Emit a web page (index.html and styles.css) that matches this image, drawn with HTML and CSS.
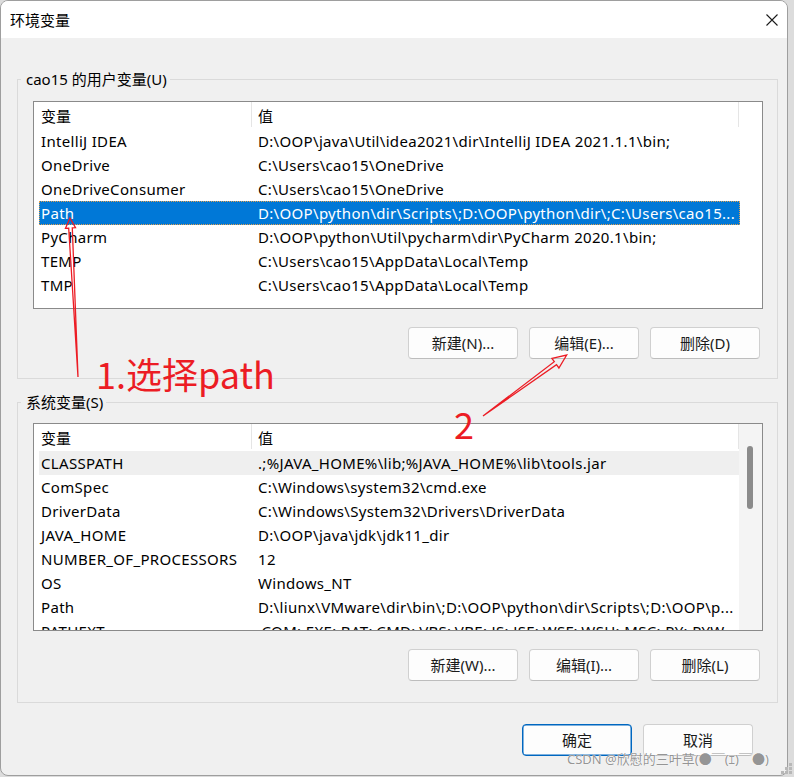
FILE: index.html
```html
<!DOCTYPE html>
<html lang="zh-CN">
<head>
<meta charset="utf-8">
<title>环境变量</title>
<link rel="stylesheet" href="styles.css">
</head>
<body>
<div class="window">
  <div class="titlebar">
    <span class="title">环境变量</span>
    <svg class="close" width="12" height="12" viewBox="0 0 12 12"><path d="M0.5 0.5 L11.5 11.5 M11.5 0.5 L0.5 11.5" stroke="#1b1b1b" stroke-width="1.1" fill="none"/></svg>
  </div>
  <div class="content">
    <fieldset class="group group-user">
      <legend>cao15 的用户变量(U)</legend>
      <div class="list">
        <div class="list-main">
          <div class="list-head"><div class="h1">变量</div><div class="h2">值</div></div>
          <div class="row"><span class="c1">IntelliJ IDEA</span><span class="c2">D:\OOP\java\Util\idea2021\dir\IntelliJ IDEA 2021.1.1\bin;</span></div>
          <div class="row"><span class="c1">OneDrive</span><span class="c2">C:\Users\cao15\OneDrive</span></div>
          <div class="row"><span class="c1">OneDriveConsumer</span><span class="c2">C:\Users\cao15\OneDrive</span></div>
          <div class="row selected"><span class="c1">Path</span><span class="c2">D:\OOP\python\dir\Scripts\;D:\OOP\python\dir\;C:\Users\cao15...</span></div>
          <div class="row"><span class="c1">PyCharm</span><span class="c2">D:\OOP\python\Util\pycharm\dir\PyCharm 2020.1\bin;</span></div>
          <div class="row"><span class="c1">TEMP</span><span class="c2">C:\Users\cao15\AppData\Local\Temp</span></div>
          <div class="row"><span class="c1">TMP</span><span class="c2">C:\Users\cao15\AppData\Local\Temp</span></div>
        </div>
      </div>
      <div class="buttons">
        <div class="btn">新建(N)...</div>
        <div class="btn">编辑(E)...</div>
        <div class="btn">删除(D)</div>
      </div>
    </fieldset>

    <fieldset class="group group-sys">
      <legend>系统变量(S)</legend>
      <div class="list">
        <div class="list-main">
          <div class="list-head"><div class="h1">变量</div><div class="h2">值</div></div>
          <div class="row hover"><span class="c1">CLASSPATH</span><span class="c2">.;%JAVA_HOME%\lib;%JAVA_HOME%\lib\tools.jar</span></div>
          <div class="row"><span class="c1">ComSpec</span><span class="c2">C:\Windows\system32\cmd.exe</span></div>
          <div class="row"><span class="c1">DriverData</span><span class="c2">C:\Windows\System32\Drivers\DriverData</span></div>
          <div class="row"><span class="c1">JAVA_HOME</span><span class="c2">D:\OOP\java\jdk\jdk11_dir</span></div>
          <div class="row"><span class="c1">NUMBER_OF_PROCESSORS</span><span class="c2">12</span></div>
          <div class="row"><span class="c1">OS</span><span class="c2">Windows_NT</span></div>
          <div class="row"><span class="c1">Path</span><span class="c2">D:\liunx\VMware\dir\bin\;D:\OOP\python\dir\Scripts\;D:\OOP\p...</span></div>
          <div class="row"><span class="c1">PATHEXT</span><span class="c2">.COM;.EXE;.BAT;.CMD;.VBS;.VBE;.JS;.JSE;.WSF;.WSH;.MSC;.PY;.PYW</span></div>
        </div>
        <div class="scrollbar"><div class="thumb"></div></div>
      </div>
      <div class="buttons">
        <div class="btn">新建(W)...</div>
        <div class="btn">编辑(I)...</div>
        <div class="btn">删除(L)</div>
      </div>
    </fieldset>

    <div class="footer">
      <div class="btn primary">确定</div>
      <div class="btn">取消</div>
    </div>
  </div>
</div>

<svg class="marks" width="794" height="777" viewBox="0 0 794 777">
  <path d="M70 218 L75.5 227.7 L72.3 227.9 L78 377 L68.7 228.1 L65.5 228.3 Z" fill="none" stroke="#ec1c24" stroke-width="1.3" stroke-linejoin="miter"/>
  <path d="M566.7 355 L558.9 368 L556.5 364.7 L483 416 L554.3 361.7 L551.9 358.4 Z" fill="none" stroke="#ec1c24" stroke-width="1.3" stroke-linejoin="miter"/>
</svg>
<div class="note note1">1.选择path</div>
<div class="note note2">2</div>
<div class="watermark">CSDN @欣慰的三叶草(●￣(ｴ)￣●)</div>
<div class="grip"><i></i><i></i><i></i><i></i><i></i><i></i></div>
</body>
</html>
```

FILE: styles.css
```css
* { box-sizing: border-box; }
html, body { margin: 0; padding: 0; }
body {
  width: 794px;
  height: 777px;
  background: #dcdcdc;
  font-family: "Noto Sans", "Noto Sans CJK SC", sans-serif;
  font-size: 15px;
  color: #000;
  position: relative;
  overflow: hidden;
}
.window {
  width: 788px;
  height: 776px;
  border: 1px solid #9e9e9e;
  border-radius: 8px;
  background: #f0f0f0;
  overflow: hidden;
  display: flex;
  flex-direction: column;
}
.titlebar {
  height: 37px;
  flex: none;
  background: #fff;
  display: flex;
  align-items: center;
  justify-content: space-between;
  padding: 0 9px 0 9px;
}
.title { line-height: 20px; }
.close { display: block; }
.content {
  padding: 0 0 0 16px;
}
fieldset.group {
  width: 761px;
  min-width: 0;
  margin: 0;
  border: 1px solid #dadada;
  padding: 0;
}
.group-user { margin-top: 31px !important; padding: 12px 0 19px 0 !important; }
.group-sys { margin-top: 13px !important; padding: 11px 0 21px 0 !important; }
legend {
  margin-left: 3px;
  padding: 0 3px 0 5px;
  line-height: 20px;
}
.list {
  margin-left: 15px;
  width: 730px;
  height: 208px;
  border: 1px solid #8a8a8a;
  background: #fff;
  display: flex;
  overflow: hidden;
}
.list-main {
  flex: 1;
  min-width: 0;
  overflow: hidden;
}
.list-head {
  height: 27px;
  display: flex;
  padding: 1px 0;
}
.h1, .h2 {
  border-right: 1px solid #e5e5e5;
  margin-top: -1px;
  height: 25px;
  padding-top: 2px;
  line-height: 25px;
}
.h1 { width: 218px; padding-left: 7px; }
.h2 { width: 487px; padding-left: 6px; }
.row {
  height: 24px;
  line-height: 24px;
  margin-left: 5px;
  width: 700px;
  display: flex;
  white-space: nowrap;
  overflow: hidden;
  letter-spacing: 0.32px;
}
.row .c1 { width: 219px; padding-left: 2px; flex: none; }
.row .c2 { flex: 1; overflow: hidden; }
.row.selected {
  background: #0078d7;
  color: #fff;
  outline: 1px dotted #e0a050;
  outline-offset: -1px;
  width: 701px;
}
.row.hover { background: #efefef; }
.scrollbar {
  width: 23px;
  flex: none;
  background: #f4f4f4;
  padding: 22px 0 0 8px;
}
.thumb {
  width: 6px;
  height: 63px;
  background: #8b8b8b;
  border-radius: 3px;
}
.buttons {
  display: flex;
  justify-content: flex-end;
  gap: 11px;
  margin-top: 18px;
  padding-right: 17px;
}
.btn {
  width: 110px;
  height: 32px;
  border: 1px solid #d0d0d0;
  border-bottom-color: #bdbdbd;
  border-radius: 4px;
  background: #fdfdfd;
  text-align: center;
  line-height: 30px;
  color: #1a1a1a;
}
.btn.primary {
  border: 1px solid #0067c0;
  box-shadow: inset 0 0 0 0.5px #0067c0;
}
.footer {
  display: flex;
  justify-content: flex-end;
  gap: 11px;
  margin-top: 21px;
  padding-right: 34px;
}
.marks {
  position: absolute;
  left: 0;
  top: 0;
  pointer-events: none;
}
.note {
  position: absolute;
  color: #ec1c24;
  font-family: "Noto Sans CJK SC", sans-serif;
  line-height: 1;
  white-space: nowrap;
}
.note1 { left: 96px; top: 355px; font-size: 36px; }
.note2 { left: 454px; top: 405px; font-size: 36px; }
.watermark {
  position: absolute;
  left: 567px;
  top: 751px;
  font-size: 13px;
  line-height: 17px;
  color: rgba(120, 120, 120, 0.8);
  text-shadow: 0 0 1px #fff, 0 0 1px #fff;
  white-space: nowrap;
}
.grip {
  position: absolute;
  left: 781px;
  top: 763px;
  width: 11px;
  height: 11px;
  display: grid;
  grid-template-columns: repeat(3, 3px);
  gap: 1px;
}
.grip i {
  width: 3px;
  height: 3px;
  background: #b8b8b8;
}
.grip i:nth-child(1) { grid-column: 3; grid-row: 1; }
.grip i:nth-child(2) { grid-column: 2; grid-row: 2; }
.grip i:nth-child(3) { grid-column: 3; grid-row: 2; }
.grip i:nth-child(4) { grid-column: 1; grid-row: 3; }
.grip i:nth-child(5) { grid-column: 2; grid-row: 3; }
.grip i:nth-child(6) { grid-column: 3; grid-row: 3; }
```
